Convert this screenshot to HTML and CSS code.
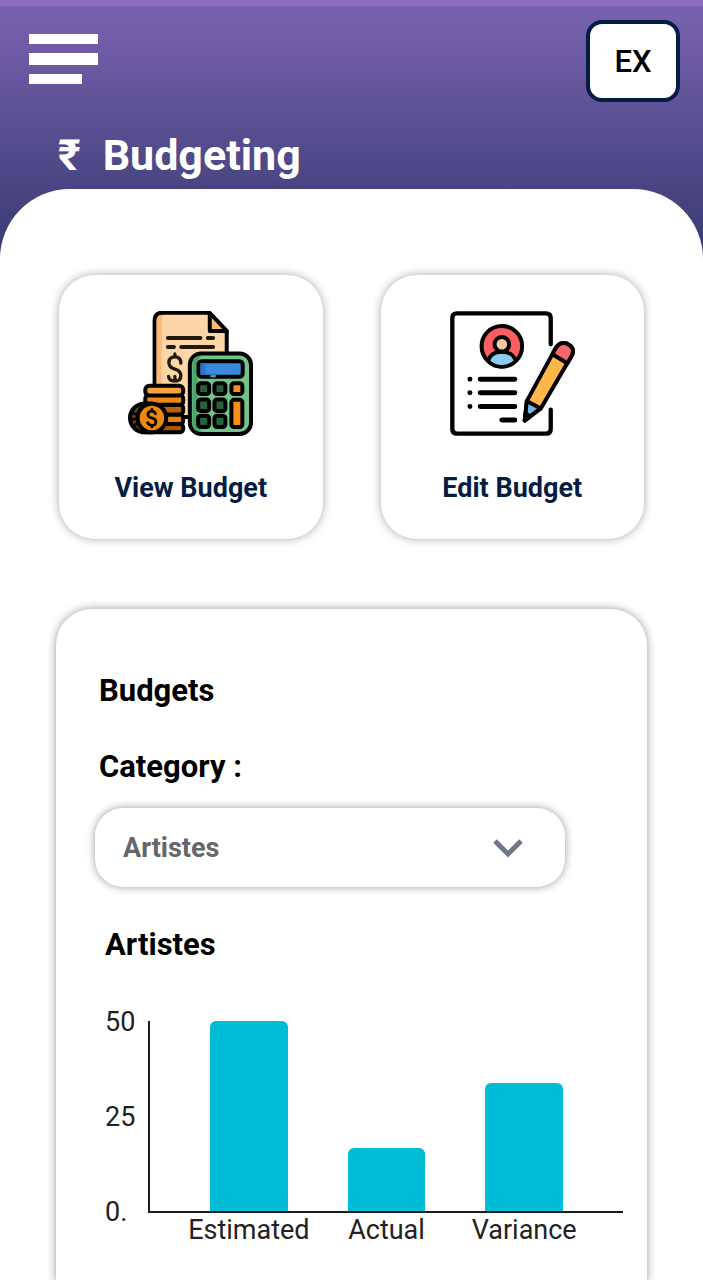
FILE: index.html
```html
<!DOCTYPE html>
<html lang="en">
<head>
<meta charset="utf-8">
<meta name="viewport" content="width=device-width, initial-scale=1">
<title>Budgeting</title>
<link rel="stylesheet" href="styles.css">
</head>
<body>
<div class="app">
  <header class="header">
    <div class="topbar">
      <button class="menu" type="button" aria-label="Menu">
        <svg viewBox="0 0 69 50" width="69" height="50" fill="#fff"><path d="M0 0h69v10H0zM0 19h69v12H0zM0 40h53v10H0z"/></svg>
      </button>
      <button class="avatar" type="button">EX</button>
    </div>
    <h1 class="title"><span class="rupee">₹</span><span>Budgeting</span></h1>
  </header>

  <main class="sheet">
    <nav class="tiles">
      <a class="tile" href="#view">
        <svg class="tile-icon" viewBox="24 33 376 376" fill="none" stroke="#000" stroke-width="12" stroke-linejoin="round" stroke-linecap="round">
          <path d="M104 330V62q0-24 24-24h140l53 56v258H104z" fill="#fdd6a8"/>
          <path d="M110 260V62q0-17 17-17h6q-8 5-8 18v197z" fill="#fdb873" stroke="none"/>
          <path d="M270 39v54h51z" fill="#fdb873"/>
          <path d="M144 114h98M264 114h16M144 141h18M184 141h96" stroke="#21180f"/>
          <path d="M183 190q0-19-18-19t-18 18q0 14 18 19t18 20q0 16-18 16t-19-14M165 162v9M165 230v9" stroke="#21180f" stroke-width="10"/>
          <rect x="68" y="373" width="122" height="25" rx="10" fill="#a85606"/>
          <rect x="76" y="344" width="114" height="29" rx="10" fill="#e57f08"/>
          <rect x="76" y="315" width="114" height="29" rx="10" fill="#b86008"/>
          <rect x="76" y="286" width="114" height="29" rx="10" fill="#ed8712"/>
          <rect x="76" y="258" width="114" height="29" rx="12" fill="#f8a343"/>
          <path d="M96 311H76c-27 0-46 20-46 44s19 43 46 43h20z" fill="#743c09"/>
          <path d="M37 339l12 5M32 358h14M39 379l12-7" stroke-width="8"/>
          <circle cx="96" cy="355" r="43" fill="#ef870f"/>
          <path d="M107 342q-3-8-11-8-12 0-12 10 0 8 12 11t12 11q0 11-12 11-9 0-13-8M96 329v5M96 377v5" stroke-width="8"/>
          <rect x="210" y="161" width="184" height="242" rx="34" fill="#72c58a"/>
          <path d="M218 190q0-21 20-21h8q-13 7-13 24v175q0 20 14 28h-8q-21 0-21-22z" fill="#4aa56b" stroke="none"/>
          <rect x="236" y="184" width="133" height="47" rx="10" fill="#3989dc"/>
          <path d="M242 190h15v35h-15z" fill="#2876cc" stroke="none"/>
          <path d="M275 229h10" stroke="#5189aa" stroke-width="8"/>
          <g fill="#22633b">
            <rect x="235" y="250" width="33" height="33" rx="8"/><rect x="284" y="250" width="33" height="33" rx="8"/>
            <rect x="235" y="299" width="33" height="35" rx="8"/><rect x="284" y="299" width="33" height="35" rx="8"/>
            <rect x="235" y="348" width="33" height="34" rx="8"/><rect x="284" y="348" width="33" height="34" rx="8"/>
          </g>
          <g fill="#f78d18"><rect x="335" y="250" width="33" height="33" rx="8"/><rect x="335" y="300" width="33" height="82" rx="8"/></g>
        </svg>
        <span>View Budget</span>
      </a>
      <a class="tile" href="#edit">
        <svg class="tile-icon" viewBox="30 33 376 376" fill="none" stroke="#000" stroke-width="13" stroke-linejoin="round" stroke-linecap="round">
          <path d="M333 133V54q0-14-14-14H51q-14 0-14 14v334q0 14 14 14h268q14 0 14-14v-58"/>
          <circle cx="186" cy="139" r="61" fill="#fa5d62" stroke-width="12"/>
          <path d="M145 184q6-28 41-28t41 28q-17 17-41 17t-41-17z" fill="#8cccf1" stroke-width="11"/>
          <circle cx="186" cy="133" r="22" fill="#f8caa8" stroke-width="12"/>
          <path d="M121 238h104M121 279h104M121 320h104M186 361h39" stroke-width="15"/>
          <path d="M90 238h0M90 279h0M90 320h0" stroke-width="15"/>
          <path d="M261 304L345 150C356 128 370 126 384 132C402 141 404 156 394 171L303 326L255 362z" fill="#ffb74b" stroke-width="12"/>
          <path d="M345 150C356 128 370 126 384 132C402 141 404 156 394 171L383 190L338 163z" fill="#fb666b" stroke-width="12"/>
          <path d="M261 304l42 22-48 36z" fill="#74b9df" stroke-width="12"/>
          <path d="M255 362l3-20 13 8z" fill="#000"/>
        </svg>
        <span>Edit Budget</span>
      </a>
    </nav>

    <section class="panel">
      <h2 class="heading">Budgets</h2>
      <label class="heading category" for="category">Category :</label>
      <div class="select">
        <select id="category"><option>Artistes</option><option>Crew</option><option>Equipment</option></select>
        <svg class="chevron" viewBox="0 0 30 20" width="30" height="20" fill="none" stroke="#6f7787" stroke-width="5"><path d="M2 3l13 13L28 3"/></svg>
      </div>
      <h3 class="heading chart-title">Artistes</h3>
      <div class="chart">
        <div class="y-axis"><span>50</span><span>25</span><span>0.</span></div>
        <div class="plot">
          <div class="bar" style="height:100%"></div>
          <div class="bar" style="height:33%"></div>
          <div class="bar" style="height:67%"></div>
        </div>
        <div class="x-axis"><span>Estimated</span><span>Actual</span><span>Variance</span></div>
      </div>
    </section>
  </main>
</div>
</body>
</html>
```
FILE: styles.css
```css
* { box-sizing: border-box; }

body {
  margin: 0;
  font-family: Roboto, "Liberation Sans", sans-serif;
  color: #000;
  background: #fff;
}

h1, h2, h3 { margin: 0; }

button { font: inherit; cursor: pointer; }

.app {
  min-height: 100vh;
  display: flex;
  flex-direction: column;
  overflow: hidden;
  border-top: 6px solid #8a6cc0;
  background: linear-gradient(#7862af 0, #69579f 68px, #5d5295 102px, #4a4684 176px, #383a70 254px) no-repeat 0 0 / 100% 254px;
}

.header { padding: 14px 23px 0 29px; }

.topbar {
  display: flex;
  justify-content: space-between;
  align-items: flex-start;
}

.menu {
  padding: 0;
  margin-top: 14px;
  border: 0;
  background: none;
}

.menu svg { display: block; }

.avatar {
  width: 94px;
  height: 82px;
  border: 4px solid #051d43;
  border-radius: 16px;
  background: #fff;
  color: #000;
  font-size: 31px;
  font-weight: 500;
}

.title {
  display: flex;
  gap: 22px;
  padding: 28px 0 9px 29px;
  font-size: 43px;
  line-height: 50px;
  font-weight: 700;
  color: #fff;
}

.sheet {
  flex: 1;
  display: flex;
  flex-direction: column;
  padding: 86px 56px 0;
  border-radius: 70px 70px 0 0;
  background: #fff;
}

.tiles {
  display: flex;
  gap: 58px;
  padding: 0 3px;
}

.tile {
  flex: 1;
  aspect-ratio: 1;
  display: flex;
  flex-direction: column;
  align-items: center;
  gap: 36px;
  padding-top: 36px;
  border-radius: 36px;
  box-shadow: 0 0 10px rgba(0, 0, 0, 0.35);
  font-size: 27px;
  line-height: 32px;
  font-weight: 700;
  color: #051d43;
  text-decoration: none;
}

.tile-icon { width: 125px; height: 125px; }

.panel {
  flex: 1;
  display: flex;
  flex-direction: column;
  margin-top: 70px;
  padding: 64px 24px 36px 39px;
  border-radius: 36px 36px 0 0;
  box-shadow: 0 0 10px rgba(0, 0, 0, 0.4);
}

.heading {
  padding-left: 4px;
  font-size: 31px;
  line-height: 36px;
  font-weight: 700;
}

.category { margin-top: 40px; }

.select {
  position: relative;
  width: 89%;
  margin-top: 23px;
}

.select select {
  appearance: none;
  display: block;
  width: 100%;
  height: 79px;
  padding: 2px 80px 0 28px;
  border: 0;
  border-radius: 28px;
  background: #fff;
  box-shadow: 0 0 8px rgba(0, 0, 0, 0.4);
  font: 700 27px Roboto, "Liberation Sans", sans-serif;
  color: #666;
}

.chevron {
  position: absolute;
  right: 42px;
  top: 30px;
  pointer-events: none;
}

.chart-title {
  margin-top: 40px;
  padding-left: 10px;
}

.chart {
  display: grid;
  grid-template-columns: 43px 1fr;
  grid-template-rows: 192px auto;
  margin-top: 58px;
  padding-left: 10px;
  font-size: 27px;
  line-height: 34px;
  color: #222;
}

.y-axis {
  display: flex;
  flex-direction: column;
  justify-content: space-between;
  margin: -16px 0;
}

.plot {
  display: flex;
  align-items: flex-end;
  gap: 60px;
  padding: 0 60px;
  border: solid #1c1c1c;
  border-width: 0 0 2px 2px;
}

.bar {
  flex: 1;
  border-radius: 6px 6px 0 0;
  background: #00bcd7;
}

.x-axis {
  grid-column: 2;
  display: flex;
  gap: 60px;
  padding: 0 60px 0 62px;
}

.x-axis span {
  flex: 1 1 0;
  width: 0;
  display: flex;
  justify-content: center;
}
```
